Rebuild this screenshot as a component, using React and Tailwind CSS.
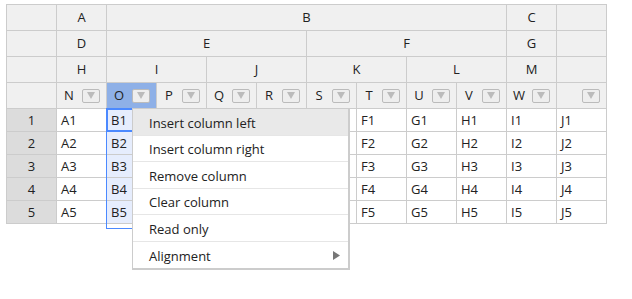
import React from "react";

const cols = ["N", "O", "P", "Q", "R", "S", "T", "U", "V", "W", ""];

// data per column index (0..10), rows 1..5 — cols 2..5 sit under the menu
const colData = ["A", "B", "", "", "", "", "F", "G", "H", "I", "J"];

const nested = [
  [
    { label: "A", span: 1 },
    { label: "B", span: 8 },
    { label: "C", span: 1 },
    { label: "", span: 1 },
  ],
  [
    { label: "D", span: 1 },
    { label: "E", span: 4 },
    { label: "F", span: 4 },
    { label: "G", span: 1 },
    { label: "", span: 1 },
  ],
  [
    { label: "H", span: 1 },
    { label: "I", span: 2 },
    { label: "J", span: 2 },
    { label: "K", span: 2 },
    { label: "L", span: 2 },
    { label: "M", span: 1 },
    { label: "", span: 1 },
  ],
];

const spanClass = {
  1: "col-span-1",
  2: "col-span-2",
  4: "col-span-4",
  8: "col-span-8",
};

function DropButton() {
  return (
    <span className="ml-[5px] flex h-[14px] w-[18px] shrink-0 items-center justify-center rounded-[2px] border border-[#bbb] bg-[#eee]">
      <svg width="8" height="7" viewBox="0 0 8 7">
        <polygon points="0,0 8,0 4,7" fill="#bbb" />
      </svg>
    </span>
  );
}

function ContextMenu() {
  const items = [
    { label: "Insert column left", h: "h-[27px]", hover: true },
    { label: "Insert column right", h: "h-[26px]" },
    { label: "Remove column", h: "h-[27px]" },
    { label: "Clear column", h: "h-[26px]" },
    { label: "Read only", h: "h-[27px]" },
    { label: "Alignment", h: "h-[26px]", sub: true, last: true },
  ];
  return (
    <div className="absolute left-[125px] top-[103px] w-[218px] border-l border-t border-r-2 border-b-2 border-[#ccc] bg-white">
      {items.map((it) => (
        <div
          key={it.label}
          className={`flex items-center justify-between pl-[16px] pr-[8px] pt-[3px] text-[13px] text-[#222] ${it.h} ${
            it.last ? "" : "border-b border-[#e6e6e6]"
          } ${it.hover ? "bg-[#e9e9e9]" : ""}`}
        >
          <span>{it.label}</span>
          {it.sub && (
            <svg width="7" height="9" viewBox="0 0 7 9" className="mb-[2px]">
              <polygon points="0,0 7,4.5 0,9" fill="#777" />
            </svg>
          )}
        </div>
      ))}
    </div>
  );
}

export default function App() {
  return (
    <div className="h-[299px] w-[632px] bg-white pl-[6px] pt-[4px] font-['Segoe_UI','Open_Sans',sans-serif] text-[13px] text-[#222]">
      <div className="relative grid w-[601px] grid-cols-[50px_repeat(11,50px)] border-l border-t border-[#ccc]">
        {/* nested header rows */}
        {nested.map((row, ri) => (
          <React.Fragment key={ri}>
            <div className="h-[26px] border-b border-r border-[#ccc] bg-[#f0f0f0]" />
            {row.map((c, ci) => (
              <div
                key={ci}
                className={`flex h-[26px] items-center justify-center border-b border-r border-[#ccc] bg-[#f0f0f0] pt-[1px] ${spanClass[c.span]}`}
              >
                {c.label}
              </div>
            ))}
          </React.Fragment>
        ))}

        {/* bottom header row with dropdown buttons */}
        <div className="h-[26px] border-b border-r border-[#ccc] bg-[#f0f0f0]" />
        {cols.map((c, i) => (
          <div
            key={i}
            className={`flex h-[26px] items-center border-b border-r border-[#ccc] pl-[4px] pr-[6px] ${
              i === 1 ? "bg-[#8eb0e7]" : "bg-[#f0f0f0]"
            }`}
          >
            <span className="flex-1 pt-[1px] text-center">{c}</span>
            <DropButton />
          </div>
        ))}

        {/* data rows */}
        {[1, 2, 3, 4, 5].map((r) => (
          <React.Fragment key={r}>
            <div className="flex h-[23px] items-center justify-center border-b border-r border-[#ccc] bg-[#dcdcdc] pt-[1px]">
              {r}
            </div>
            {colData.map((d, i) => (
              <div
                key={i}
                className={`flex h-[23px] items-center border-b border-r border-[#ccc] pl-[4px] pt-[1px] ${
                  i === 1 ? "bg-[#e6edfd]" : "bg-white"
                }`}
              >
                {d ? `${d}${r}` : ""}
              </div>
            ))}
          </React.Fragment>
        ))}

        {/* selection borders */}
        <div className="pointer-events-none absolute left-[99px] top-[103px] h-[121px] w-[51px] border border-[#4b89ff]" />
        <div className="pointer-events-none absolute left-[99px] top-[103px] h-[24px] w-[51px] border-2 border-[#4b89ff]" />

        <ContextMenu />
      </div>
    </div>
  );
}
